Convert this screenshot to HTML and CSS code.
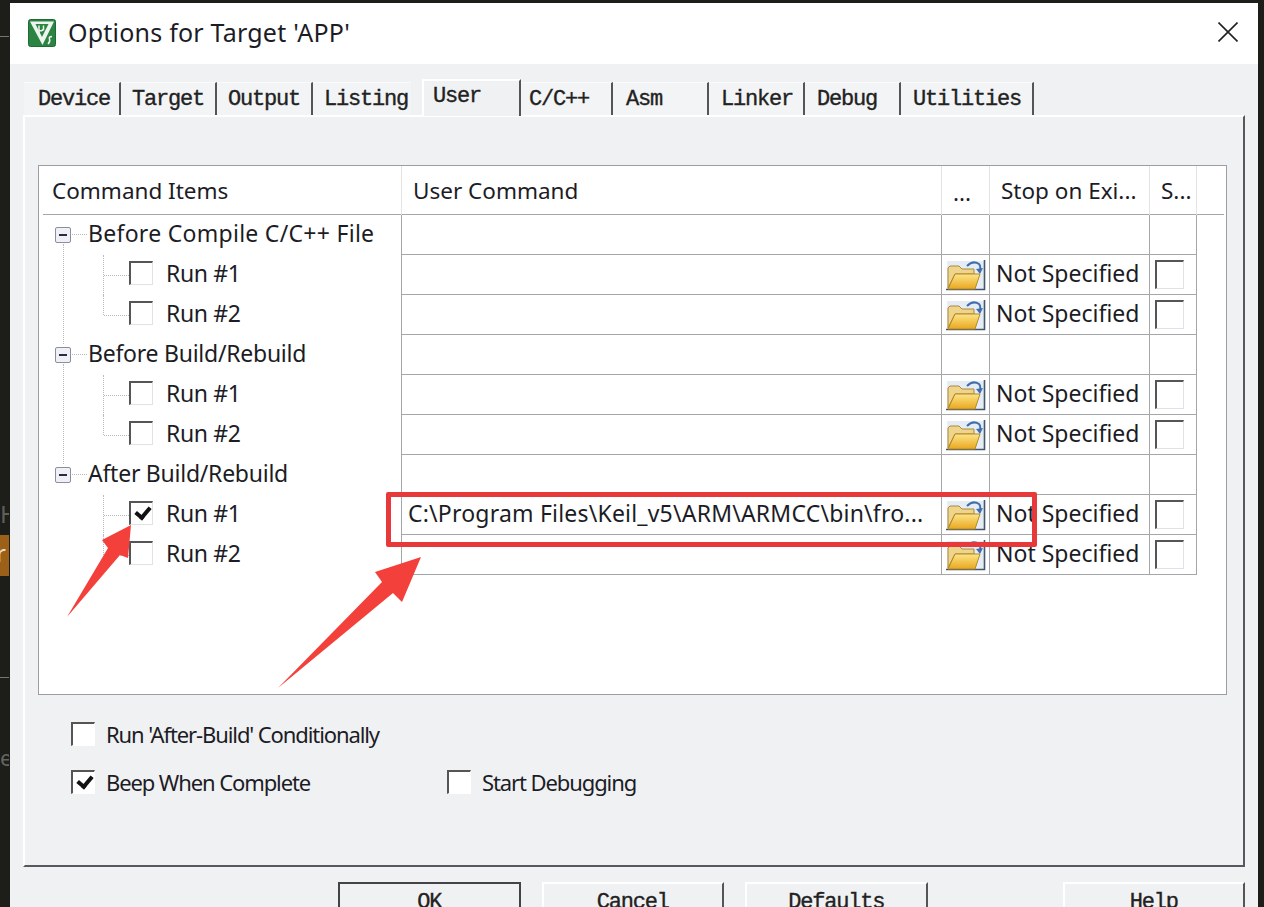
FILE: index.html
```html
<!DOCTYPE html>
<html>
<head>
	<title>Options for Target 'APP'</title>
	<link rel="stylesheet" href="styles.css">
</head>
<body>
	<div class="desk-bits">
		<span class="bit-line bit-top"></span>
		<span class="bit-h">H</span>
		<span class="bit-orange">r</span>
		<span class="bit-line bit-low"></span>
		<span class="bit-e">e</span>
	</div>
	<div class="window">
		<div class="titlebar">
			<svg class="app-icon" viewBox="0 0 28 28">
				<rect x="0.5" y="0.5" width="27" height="27" rx="2" fill="#2c8442" stroke="#1f6b33"/>
				<path d="M2 2.5 H26 L14.5 26 Z" fill="#eef5ee"/>
				<path d="M7.5 5 H20.5 L14 18 Z" fill="#2c8442"/>
				<path d="M11 6.5 V15 M11 11 Q13.5 13 15.5 10 M15.5 6.5 V11.5" stroke="#eef5ee" stroke-width="1.5" fill="none"/>
				<path d="M24 17.5 Q20.5 17.5 21.5 20 T20 25" stroke="#eef5ee" stroke-width="1.5" fill="none"/>
			</svg>
			<span class="title-text">Options for Target 'APP'</span>
			<svg class="close-icon" viewBox="0 0 20 20">
				<path d="M0.5 0.5 L19.5 19.5 M19.5 0.5 L0.5 19.5" stroke="#222" stroke-width="1.6" fill="none"/>
			</svg>
		</div>

		<div class="dialog">
			<div class="tabs">
				<div class="tab tab-device">Device</div>
				<div class="tab tab-target">Target</div>
				<div class="tab tab-output">Output</div>
				<div class="tab tab-listing">Listing</div>
				<div class="tab tab-user active">User</div>
				<div class="tab tab-cc">C/C++</div>
				<div class="tab tab-asm">Asm</div>
				<div class="tab tab-linker">Linker</div>
				<div class="tab tab-debug">Debug</div>
				<div class="tab tab-util">Utilities</div>
			</div>

			<div class="panel">
				<div class="grid">
					<div class="row row-head">
						<div class="cell col-items">Command Items</div>
						<div class="cell col-cmd">User Command</div>
						<div class="cell col-dots">...</div>
						<div class="cell col-stop">Stop on Exi...</div>
						<div class="cell col-s">S...</div>
					</div>

					<div class="row group more">
						<div class="cell col-items wide"><span class="minus"></span><span class="hdots"></span>Before Compile C/C++ File</div>
						<div class="cell col-cmd"></div><div class="cell col-dots"></div><div class="cell col-stop"></div><div class="cell col-s"></div>
					</div>
					<div class="row">
						<div class="cell col-items child"><span class="vdots"></span><span class="hdots"></span><span class="check"></span>Run #1</div>
						<div class="cell col-cmd"></div>
						<div class="cell col-dots"><svg class="folder"><use href="#folder"/></svg></div>
						<div class="cell col-stop">Not Specified</div>
						<div class="cell col-s"><span class="check"></span></div>
					</div>
					<div class="row">
						<div class="cell col-items child last"><span class="vdots"></span><span class="hdots"></span><span class="check"></span>Run #2</div>
						<div class="cell col-cmd"></div>
						<div class="cell col-dots"><svg class="folder"><use href="#folder"/></svg></div>
						<div class="cell col-stop">Not Specified</div>
						<div class="cell col-s"><span class="check"></span></div>
					</div>

					<div class="row group more">
						<div class="cell col-items"><span class="minus"></span><span class="hdots"></span>Before Build/Rebuild</div>
						<div class="cell col-cmd"></div><div class="cell col-dots"></div><div class="cell col-stop"></div><div class="cell col-s"></div>
					</div>
					<div class="row">
						<div class="cell col-items child"><span class="vdots"></span><span class="hdots"></span><span class="check"></span>Run #1</div>
						<div class="cell col-cmd"></div>
						<div class="cell col-dots"><svg class="folder"><use href="#folder"/></svg></div>
						<div class="cell col-stop">Not Specified</div>
						<div class="cell col-s"><span class="check"></span></div>
					</div>
					<div class="row">
						<div class="cell col-items child last"><span class="vdots"></span><span class="hdots"></span><span class="check"></span>Run #2</div>
						<div class="cell col-cmd"></div>
						<div class="cell col-dots"><svg class="folder"><use href="#folder"/></svg></div>
						<div class="cell col-stop">Not Specified</div>
						<div class="cell col-s"><span class="check"></span></div>
					</div>

					<div class="row group">
						<div class="cell col-items"><span class="minus"></span><span class="hdots"></span>After Build/Rebuild</div>
						<div class="cell col-cmd"></div><div class="cell col-dots"></div><div class="cell col-stop"></div><div class="cell col-s"></div>
					</div>
					<div class="row">
						<div class="cell col-items child"><span class="vdots"></span><span class="hdots"></span><span class="check checked"></span>Run #1</div>
						<div class="cell col-cmd cmd-path">C:\Program Files\Keil_v5\ARM\ARMCC\bin\fro...</div>
						<div class="cell col-dots"><svg class="folder"><use href="#folder"/></svg></div>
						<div class="cell col-stop">Not Specified</div>
						<div class="cell col-s"><span class="check"></span></div>
					</div>
					<div class="row">
						<div class="cell col-items child last"><span class="vdots"></span><span class="hdots"></span><span class="check"></span>Run #2</div>
						<div class="cell col-cmd"></div>
						<div class="cell col-dots"><svg class="folder"><use href="#folder"/></svg></div>
						<div class="cell col-stop">Not Specified</div>
						<div class="cell col-s"><span class="check"></span></div>
					</div>
				</div>

				<div class="opts">
					<div class="opt-row">
						<label class="opt"><span class="check"></span>Run 'After-Build' Conditionally</label>
					</div>
					<div class="opt-row">
						<label class="opt opt-beep"><span class="check checked"></span>Beep When Complete</label>
						<label class="opt"><span class="check"></span>Start Debugging</label>
					</div>
				</div>
			</div>

			<div class="buttons">
				<div class="btn btn-ok">OK</div>
				<div class="btn">Cancel</div>
				<div class="btn">Defaults</div>
				<div class="btn btn-help">Help</div>
			</div>
		</div>
	</div>

	<!-- red marks drawn on top of the screenshot -->
	<div class="red-box"></div>
	<svg class="arrows" viewBox="0 0 1264 907">
		<path d="M67 617 L108 548 L102 540 L131 525 L128 558 L120 555 Z" fill="#f4403a"/>
		<path d="M278 688 L382 582 L375 572 L421 557 L402 602 L393 593 Z" fill="#f4403a"/>
	</svg>

	<svg class="defs">
		<defs>
			<linearGradient id="folder-front" x1="0" y1="0" x2="0" y2="1">
				<stop offset="0" stop-color="#fde58a"/>
				<stop offset="1" stop-color="#e9a71e"/>
			</linearGradient>
		</defs>
		<symbol id="folder" viewBox="0 0 40 32">
			<rect x="1" y="2" width="37" height="28" fill="#e6ecf4"/>
			<path d="M38.5 1 V30.5 H0" stroke="#46566c" stroke-width="1.6" fill="none"/>
			<path d="M2 29 V9 L4 7 H13 L16 10 H28 V15 H9 Z" fill="#eed48c" stroke="#a98a3c" stroke-width="1"/>
			<path d="M2 30 L9 15 H34 L29 30 Z" fill="url(#folder-front)" stroke="#b58a20" stroke-width="1"/>
			<path d="M21 7 Q27 1 33 5 Q35 7 34 12" stroke="#3f6fb0" stroke-width="2" fill="none"/>
			<path d="M30 10 L34 15 L37 9 Z" fill="#3f6fb0"/>
		</symbol>
	</svg>
</body>
</html>
```

FILE: styles.css
```css
html, body {
	margin: 0;
	padding: 0;
	height: 907px;
	overflow: hidden;
}
body {
	background-color: #1d1d19;
	font-family: "Noto Sans", Arial, sans-serif;
	color: #1c1c26;
	position: relative;
}

/* desktop bits showing left of the dialog */
.desk-bits span {
	position: absolute;
	left: 0;
}
.bit-line {
	width: 9px;
	height: 1px;
	background-color: #77776f;
}
.bit-top { top: 36px; }
.bit-low { top: 677px; }
.bit-h {
	top: 498px;
	width: 9px;
	overflow: hidden;
	font-size: 24px;
	color: #5f5f58;
	line-height: 32px;
}
.bit-orange {
	top: 535px;
	width: 9px;
	height: 41px;
	background-color: #9c6018;
	color: #eadcc8;
	font-size: 24px;
	line-height: 36px;
	overflow: hidden;
	text-indent: -4px;
}
.bit-e {
	top: 742px;
	width: 9px;
	overflow: hidden;
	font-size: 22px;
	line-height: 30px;
	color: #66665f;
}

.window {
	margin: 3px 6px 0 10px;
	background-color: #f0f1f2;
	height: 904px;
	overflow: hidden;
}

.titlebar {
	height: 61px;
	background-color: #fff;
	display: flex;
	align-items: center;
	padding: 0 20px 0 18px;
}
.app-icon {
	width: 28px;
	height: 28px;
	margin-top: -2px;
}
.title-text {
	margin-left: 12px;
	font-size: 25px;
	letter-spacing: 0.22px;
	margin-top: -3px;
	flex: 1;
}
.close-icon {
	width: 20px;
	height: 20px;
	margin-top: -3px;
}

.dialog {
	padding: 0 13px;
	position: relative;
}

/* tabs, each one has a hard right edge */
.tabs {
	display: flex;
	height: 34px;
	margin-top: 17px;
	align-items: flex-end;
	padding-left: 1px;
	font-family: "Liberation Mono", monospace;
	font-size: 22px;
	letter-spacing: -1.2px;
	-webkit-text-stroke: 0.35px #222;
	color: #222;
}
.tab {
	height: 33px;
	box-sizing: border-box;
	border-right: 2px solid #555;
	border-top: 1px solid #fafafa;
	background-color: #f3f4f5;
	line-height: 33px;
	padding-left: 11px;
	flex: none;
	white-space: nowrap;
}
.tab-device { width: 97px; padding-left: 14px; }
.tab-target { width: 96px; }
.tab-output { width: 96px; }
.tab-listing { width: 98px; border-right: none; }
.tab-user {
	width: 99px;
	margin-left: 11px;
	height: 37px;
	line-height: 31px;
	padding-left: 9px;
	background-color: #f0f1f2;
	border-top: 2px solid #fff;
	border-left: 2px solid #fff;
	position: relative;
	z-index: 1;
	margin-bottom: -1px;
}
.tab-cc { width: 92px; padding-left: 8px; }
.tab-asm { width: 96px; padding-left: 13px; }
.tab-linker { width: 96px; padding-left: 12px; }
.tab-debug { width: 96px; padding-left: 12px; }
.tab-util { width: 133px; padding-left: 12px; }

.panel {
	box-sizing: border-box;
	height: 752px;
	border-top: 2px solid #fff;
	border-left: 2px solid #fff;
	border-right: 2px solid #55585c;
	border-bottom: 2px solid #55585c;
	padding: 48px 16px 0 13px;
}

.grid {
	height: 528px;
	background-color: #fff;
	border: 1px solid #9c9ea3;
	padding-right: 0;
}
.row {
	display: grid;
	grid-template-columns: 362px 540px 48px 160px 48px;
	height: 40px;
	font-size: 23px;
	line-height: 36px;
}
.row-head {
	height: 48px;
	line-height: 49px;
	border-bottom: 1px solid #a4a6aa;
	margin: 0 2px 0 4px;
	grid-template-columns: 358px 540px 48px 160px 48px;
	box-sizing: content-box;
	font-size: 22.5px;
}
.row-head .cell {
	border-left: 1px solid #e3e3e6;
	border-bottom: none;
	padding-left: 11px;
}
.row-head .col-items {
	border-left: none;
	padding-left: 9px;
}
.row-head .col-dots { padding-left: 11px; }
.row-head .col-s { border-right: 1px solid #e3e3e6; }

.cell {
	box-sizing: border-box;
	border-left: 1px solid #a4a6aa;
	border-bottom: 1px solid #a4a6aa;
	white-space: nowrap;
	overflow: hidden;
}
.col-s {
	border-right: 1px solid #a4a6aa;
	display: flex;
	align-items: center;
	padding-left: 5px;
}
.col-s .check {
	width: 29px;
	height: 29px;
}
.row-head .col-s { display: block; }
.col-stop { padding-left: 6px; }
.col-dots {
	display: flex;
	align-items: center;
	padding: 0 0 0 4px;
}

.col-items {
	border: none;
	position: relative;
	display: flex;
	align-items: center;
	padding: 0 0 4px 49px;
	overflow: visible;
}
.row-head .col-items { display: block; }
.group .col-items { letter-spacing: -0.25px; }
.group .wide { letter-spacing: 0.28px; }

/* tree connectors */
.minus {
	position: absolute;
	left: 16px;
	top: 12px;
	width: 14px;
	height: 14px;
	border: 1px solid #8a8ea0;
	border-radius: 2px;
	background-color: #eef0f6;
}
.minus::after {
	content: "";
	position: absolute;
	left: 3px;
	top: 6px;
	width: 8px;
	height: 2px;
	background-color: #2b2b40;
}
.group .hdots {
	position: absolute;
	left: 33px;
	top: 19px;
	width: 15px;
	border-top: 1px dotted #bbb;
}
.more .col-items::before {
	content: "";
	position: absolute;
	left: 24px;
	top: 29px;
	height: 100px;
	border-left: 1px dotted #bbb;
}
.child {
	padding-left: 90px;
	letter-spacing: -0.35px;
}
.child .vdots {
	position: absolute;
	left: 64px;
	top: 0;
	height: 40px;
	border-left: 1px dotted #bbb;
}
.child.last .vdots { height: 20px; }
.child .hdots {
	position: absolute;
	left: 65px;
	top: 20px;
	width: 25px;
	border-top: 1px dotted #bbb;
}
.child .check { margin-right: 13px; }

.check {
	display: inline-block;
	flex: none;
	box-sizing: border-box;
	width: 24px;
	height: 24px;
	background-color: #fff;
	border-top: 2px solid #555;
	border-left: 2px solid #555;
	border-right: 1px solid #e2e2e4;
	border-bottom: 1px solid #e2e2e4;
	position: relative;
}
.checked::after {
	content: "";
	position: absolute;
	left: 7px;
	top: 1px;
	width: 6px;
	height: 11px;
	border-right: 4px solid #111;
	border-bottom: 4px solid #111;
	transform: rotate(40deg);
}

.folder {
	width: 40px;
	height: 32px;
}
.defs {
	position: absolute;
	width: 0;
	height: 0;
}

.cmd-path {
	padding-left: 6px;
	letter-spacing: 0.2px;
}

.opts {
	padding: 15px 0 0 33px;
}
.opt-row {
	display: flex;
	height: 48px;
	align-items: center;
}
.opt {
	display: flex;
	align-items: center;
	font-size: 22px;
	letter-spacing: -1.1px;
}
.opt .check {
	margin-right: 11px;
	border-right-color: #fff;
	border-bottom-color: #fff;
}
.opt-beep { width: 376px; }

/* bottom buttons, cut off by the window edge */
.buttons {
	display: flex;
	padding: 15px 0 0 315px;
	font-family: "Liberation Mono", monospace;
	font-size: 22px;
	letter-spacing: -1.2px;
	-webkit-text-stroke: 0.35px #222;
	color: #222;
}
.btn {
	box-sizing: border-box;
	width: 184px;
	height: 40px;
	margin-right: 21px;
	text-align: center;
	line-height: 38px;
	border-top: 2px solid #fff;
	border-left: 2px solid #fff;
	border-right: 2px solid #555;
}
.btn-ok {
	border: 2px solid #444;
	width: 184px;
}
.btn-help {
	margin-left: 114px;
	margin-right: 0;
}

.red-box {
	position: absolute;
	left: 386px;
	top: 492px;
	width: 651px;
	height: 55px;
	box-sizing: border-box;
	border: 5px solid #e8393a;
	border-radius: 2px;
}
.arrows {
	position: absolute;
	left: 0;
	top: 0;
	width: 1264px;
	height: 907px;
}
```
